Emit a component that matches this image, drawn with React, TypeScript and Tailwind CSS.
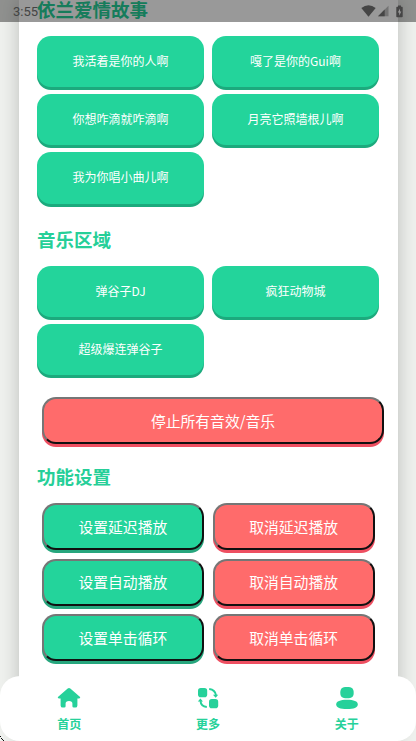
import type { ReactNode } from "react";

const storySounds = [
  "我活着是你的人啊",
  "嘎了是你的Gui啊",
  "你想咋滴就咋滴啊",
  "月亮它照墙根儿啊",
  "我为你唱小曲儿啊",
];

const musicSounds = ["弹谷子DJ", "疯狂动物城", "超级爆连弹谷子"];

const settings = [
  { set: "设置延迟播放", cancel: "取消延迟播放" },
  { set: "设置自动播放", cancel: "取消自动播放" },
  { set: "设置单击循环", cancel: "取消单击循环" },
];

function Heading({ children }: { children: ReactNode }) {
  return (
    <h2 className="text-[18.5px] leading-[18px] font-bold text-[#26cf98] whitespace-nowrap">
      {children}
    </h2>
  );
}

function SoundGrid({ sounds }: { sounds: string[] }) {
  return (
    <div className="grid grid-cols-2 gap-x-2 gap-y-[7px] w-[342px]">
      {sounds.map((sound) => (
        <button
          key={sound}
          className="h-[51.2px] rounded-[14px] bg-[#23d49b] pb-px text-xs text-white shadow-[0_3px_0_#1caa7d]"
        >
          {sound}
        </button>
      ))}
    </div>
  );
}

function ActionButton({ label, danger }: { label: string; danger?: boolean }) {
  return (
    <button
      className={
        danger
          ? "w-full h-[47px] rounded-[14px] border-2 border-t-[#767676] border-l-[#767676] border-r-[#101010] border-b-[#101010] bg-[#ff6b6b] text-[14.8px] text-white shadow-[0_3px_0_#ee4f61]"
          : "w-full h-[47px] rounded-[14px] border-2 border-t-[#767676] border-l-[#767676] border-r-[#101010] border-b-[#101010] bg-[#23d49b] text-[14.8px] text-white shadow-[0_3px_0_#26a67d]"
      }
    >
      {label}
    </button>
  );
}

function HomeIcon() {
  return (
    <svg width="24" height="22" viewBox="0 0 24 22" fill="#26d19a">
      <path d="M10.7 1.6q1.3-1.2 2.6 0l9.5 8.1q.8.8.2 1.3-.3.4-1 .4h-1.6v7q0 2.2-2.2 2.2h-1.4q-1.4 0-1.4-1.4v-2.6q0-2.6-3.4-2.6t-3.4 2.6v2.6q0 1.4-1.4 1.4H5.8q-2.2 0-2.2-2.2v-7H2q-.7 0-1-.4-.6-.5.2-1.3z" />
    </svg>
  );
}

function MoreIcon() {
  return (
    <svg width="22" height="22" viewBox="0 0 22 22" fill="#26d19a">
      <rect x="1" y="1" width="9.2" height="9.2" rx="2.8" />
      <rect x="12" y="12" width="9.2" height="9.2" rx="2.8" />
      <path d="M12.2 2.1q6 .7 6.8 6.3M9.8 20q-6-.7-6.3-6.3" fill="none" stroke="#26d19a" strokeWidth="2" />
      <path d="M15.9 7.7h5.3l-2.5 3zM.8 14.5h5.2l-2.6-3z" />
    </svg>
  );
}

function AboutIcon() {
  return (
    <svg width="24" height="22" viewBox="0 0 24 22" fill="#26d19a">
      <path d="M12 0c5.2 0 6.7 1.7 6.7 5.8S17.1 11.3 12 11.3 5.3 9.9 5.3 5.8 6.8 0 12 0z" />
      <path d="M12 12.7c6.8 0 10.8 1.5 10.8 4.7S18.8 22 12 22 1.2 20.6 1.2 17.4 5.2 12.7 12 12.7z" />
    </svg>
  );
}

function StatusBar() {
  return (
    <div className="absolute inset-x-0 top-0 h-[22px] flex items-center justify-between bg-black/40 pl-[13px] pr-[13.5px] font-[Roboto]">
      <span className="text-[13px] leading-[22px] pt-px text-[#444]">3:55</span>
      <div className="flex items-center text-[#454545]">
        <svg width="15" height="12" viewBox="0 0 15 12" fill="currentColor">
          <path d="M.3 3q7.2-5.5 14.4 0L7.5 11.7z" />
        </svg>
        <svg className="ml-[2px]" width="11" height="12" viewBox="0 0 11 12" fill="currentColor">
          <path d="M0 11.3 10.5.8v10.5z" opacity=".45" />
          <path d="M0 11.3 6.7 4.6v6.7z" />
        </svg>
        <svg className="ml-[7px]" width="7" height="13" viewBox="0 0 7 13">
          <path d="M2 .5h3v1.3h1q.7 0 .7.7v9q0 .8-.8.8H1.1q-.8 0-.8-.8v-9q0-.7.7-.7h1z" fill="currentColor" />
          <path d="M4 3.4 1.8 7.5h1.4v3.2l2.1-4.2H4z" fill="#999" />
        </svg>
      </div>
    </div>
  );
}

const tabs = [
  { label: "首页", icon: <HomeIcon /> },
  { label: "更多", icon: <MoreIcon /> },
  { label: "关于", icon: <AboutIcon /> },
];

export default function App() {
  return (
    <div className="relative w-[416px] h-[741px] overflow-hidden bg-[#eff1ee] font-['Noto_Sans_CJK_SC',sans-serif]">
      <main className="ml-[18.5px] w-[379px] h-[741px] bg-white pl-[18.5px] shadow-[0_0_18px_rgba(0,0,0,0.22)]">
        <div className="h-9">
          <Heading>依兰爱情故事</Heading>
        </div>
        <SoundGrid sounds={storySounds} />

        <div className="pt-[26.4px] pb-[18px]">
          <Heading>音乐区域</Heading>
        </div>
        <SoundGrid sounds={musicSounds} />

        <div className="pt-[21.8px] pl-[5px] w-[347px]">
          <ActionButton label="停止所有音效/音乐" danger />
        </div>

        <div className="pt-[22.4px] pb-[18.6px]">
          <Heading>功能设置</Heading>
        </div>
        <div className="grid grid-cols-2 gap-x-[9px] gap-y-[8.6px] pl-[5px] w-[337.5px]">
          {settings.map((item) => (
            <div key={item.set} className="contents">
              <ActionButton label={item.set} />
              <ActionButton label={item.cancel} danger />
            </div>
          ))}
        </div>
      </main>

      <nav className="absolute inset-x-0 bottom-0 h-[65px] grid grid-cols-3 rounded-[20px] bg-white">
        {tabs.map((tab) => (
          <a key={tab.label} className="flex flex-col items-center pt-[11px]">
            {tab.icon}
            <span className="mt-[6px] text-xs leading-[18px] font-bold text-[#26d19a]">{tab.label}</span>
          </a>
        ))}
      </nav>

      {/* device corner */}
      <svg className="absolute left-0 bottom-0" width="4" height="5" viewBox="0 0 4 5" fill="#111">
        <path d="M0 0h1v1H0zM1 2h1v1H1zM2 3h1v1H2zM3 4h1v1H3z" />
      </svg>

      <StatusBar />
    </div>
  );
}
